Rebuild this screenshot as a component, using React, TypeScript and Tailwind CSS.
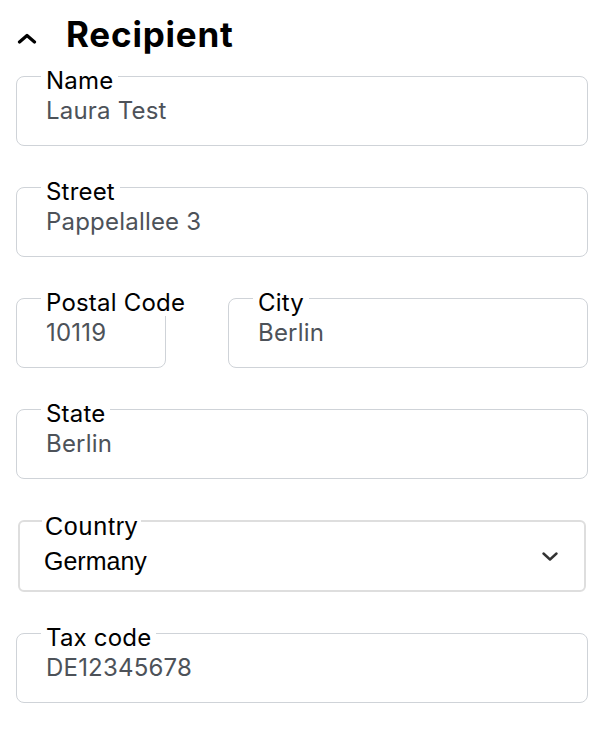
import React from 'react';

const inter = { fontFamily: 'Inter, "Noto Sans", sans-serif' };

function Field({ label, value, className = '' }: { label: string; value: string; className?: string }) {
  return (
    <div className={`relative h-[70px] rounded-lg border border-[#cfd3d8] ${className}`}>
      <span className="absolute left-[24px] top-[-9px] whitespace-nowrap bg-white px-[5px] text-[24px] leading-[26px] tracking-[0.2px] text-black">
        {label}
      </span>
      <div className="pl-[29px] pt-[21px] text-[24px] leading-[26px] tracking-[0.2px] text-[#4d5259]">{value}</div>
    </div>
  );
}

export default function App() {
  return (
    <div className="bg-white w-[602px] h-[730px] pl-4 pr-[14px] pt-[12px]" style={inter}>
      <div className="flex items-center h-[44px]">
        <svg width="20" height="11" viewBox="0 0 20 11" fill="none" stroke="#000" strokeWidth="3.2" strokeLinecap="round" strokeLinejoin="round" className="ml-[1px] mt-[8px]">
          <path d="M2.5 9L10 2.5L17.5 9" />
        </svg>
        <h2 className="ml-[29px] text-[35px] font-bold leading-none tracking-[0.8px] text-black">Recipient</h2>
      </div>
      <div className="mt-[20px] flex flex-col gap-[41px]">
        <Field label="Name" value="Laura Test" />
        <Field label="Street" value="Pappelallee 3" />
        <div className="flex gap-[62px]">
          <Field label="Postal Code" value="10119" className="w-[150px] shrink-0" />
          <Field label="City" value="Berlin" className="flex-1" />
        </div>
        <Field label="State" value="Berlin" />
        <div className="relative ml-[2px] mr-[2px] h-[72px] rounded-md border-2 border-[#dedede]" style={{ fontFamily: '"Liberation Sans", Arial, sans-serif' }}>
          <span className="absolute left-[22px] top-[-10px] bg-white px-[3px] text-[25px] leading-[28px] tracking-[0.8px] text-black">Country</span>
          <div className="flex items-start justify-between pl-[24px] pr-[26px] pt-[25px]">
            <span className="text-[25px] leading-[28px] text-black">Germany</span>
            <svg width="16" height="9" viewBox="0 0 16 9" fill="none" stroke="#333" strokeWidth="2.4" strokeLinecap="round" strokeLinejoin="round" className="mt-[5px]">
              <path d="M1.5 1.5L8 7.5L14.5 1.5" />
            </svg>
          </div>
        </div>
        <Field label="Tax code" value="DE12345678" />
      </div>
    </div>
  );
}
